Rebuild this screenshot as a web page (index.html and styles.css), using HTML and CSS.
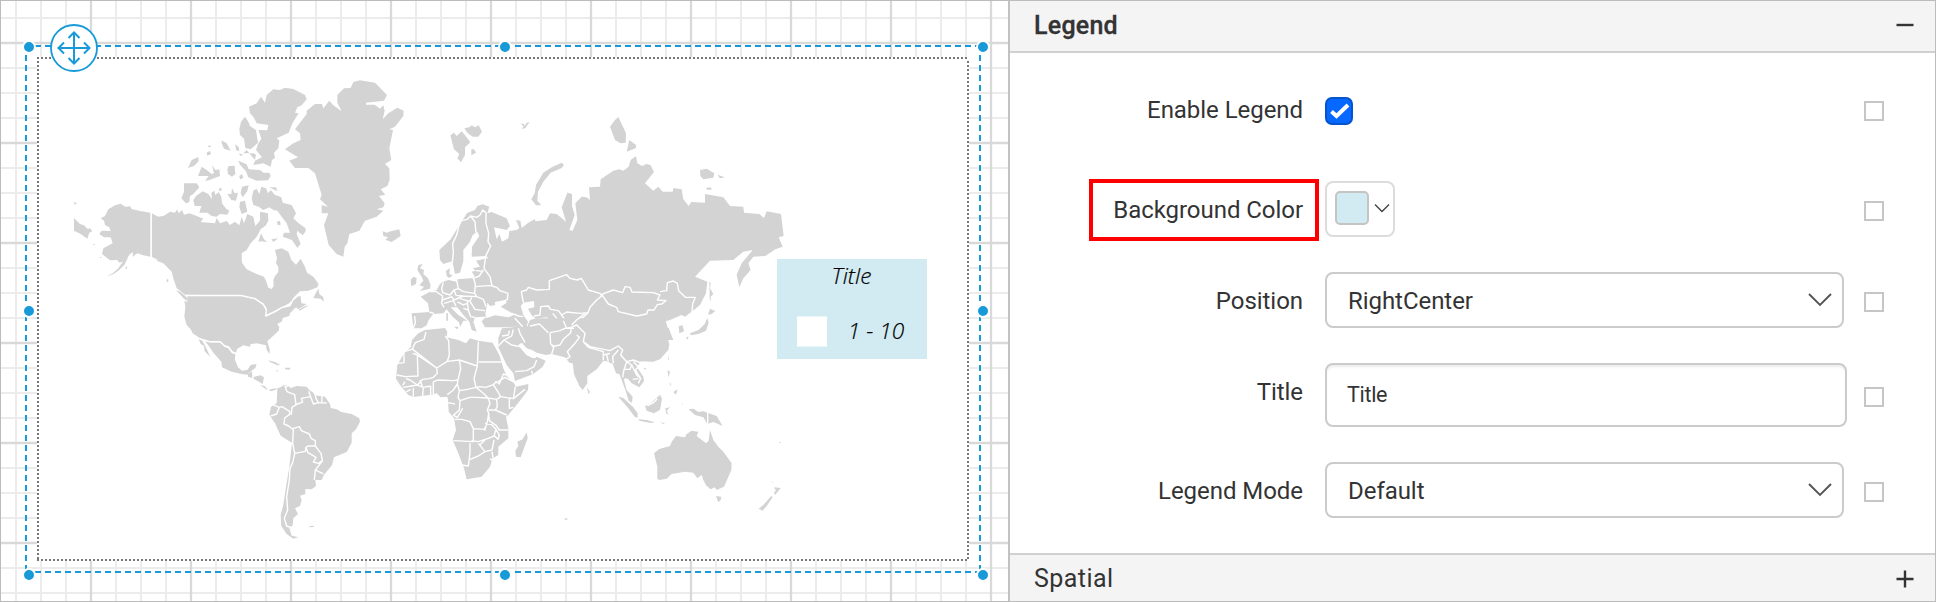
FILE: index.html
```html
<!DOCTYPE html>
<html lang="en">
<head>
<meta charset="utf-8">
<title>Map legend properties</title>
<link rel="stylesheet" href="styles.css">
</head>
<body>
<div class="app">
  <main class="canvas">
    <svg class="design" width="1007" height="600" viewBox="1 1 1007 600">
      <defs>
        <pattern id="grid" x="15" y="17" width="100" height="100" patternUnits="userSpaceOnUse">
          <path class="minor" d="M1 0V100M26 0V100M51 0V100M0 1H100M0 51H100M0 76H100"/>
          <path class="major" d="M76 0V100M0 26H100"/>
        </pattern>
      </defs>
      <rect x="0" y="0" width="1010" height="602" fill="url(#grid)"/>
      <rect class="paper" x="37" y="57" width="932" height="504"/>
      <path class="dots" d="M37 58H969M38 61V560M968 61V560M37 560H969"/>
      <path class="dashes" d="M35 46H981M35 572H981M26 45V573M980 45V573"/>

      <!-- North America -->
      <g class="land" transform="translate(60 70) scale(.33333)">
        <path d="M42 396L51 400L43 404ZM42 444L60 462L72 466L84 478L90 474L97 484L88 488L82 506L62 492L42 482Z"/>
        <path d="M122 445L135 438L145 418L165 406L182 401L196 410L210 409L215 417L240 423L272 428V560L250 556L232 550L218 560L219 547L210 552L196 572L178 578L172 570L150 571L126 552L130 535L158 520L152 502L132 502L118 492L125 482L152 483L148 472L135 465L132 452Z"/>
        <path d="M138 620L160 608L175 595L190 572L205 560L193 585L175 602L160 612ZM195 594L202 588L200 598ZM100 522h5v3h-5zM120 561h4v3h-4zM320 628h5v8h-5z"/>
        <path d="M275 430L295 440L312 437L330 425L345 428L352 418L356 430L366 420L372 434L388 430L410 438L430 446L422 456L465 460L470 444L480 460L500 453L510 465L525 455L538 466L545 440L552 460L562 432L580 440L586 468L600 452L606 470L590 500L572 520L560 540L545 550L546 578L560 598L590 612L612 620L618 632L625 653L635 657L641 648L640 630L645 618L655 606L655 590L648 580L651 565L645 540L665 535L685 545L694 570L708 584L722 566L735 590L741 608L760 620L776 642L772 652L745 662L720 664L700 683L688 700L665 712L645 722L618 735L620 715L610 700L585 686L545 678L375 674L360 662L350 655L340 625L335 605L310 580L290 572L275 562Z"/>
        <path d="M348 660L362 666L380 682L383 694L372 686ZM692 690L708 682L722 678L724 700L740 702L715 718L704 706L695 710ZM760 684L768 668L776 656L778 672L790 682L791 695L782 686Z"/>
        <path d="M567 110L590 100L603 80L615 98L620 75L640 58L660 60L675 53L700 57L735 75L740 88L725 106L712 112L705 128L716 130L698 158L686 188L650 205L658 212L655 235L642 248L645 264L636 270L632 290L610 280L580 285L585 272L606 262L588 240L594 222L604 206L595 180L622 181L625 165L590 160L580 140L570 130Z"/>
        <path d="M538 178L543 155L555 140L565 155L570 168L588 180L594 218L572 238L556 234L552 206L540 195Z"/>
        <path d="M535 272L560 283L566 298L600 300L610 308L628 308L632 318L624 331L590 332L565 322L558 304L540 284ZM384 294L395 270L415 261L416 274L402 288ZM414 318L425 290L440 300L455 312L462 310L456 285L466 300L478 298L480 318L448 330L435 333L446 318ZM440 248L450 242L453 252L442 257ZM444 228l8 -2v5h-8zM484 211L500 220L512 242L492 236L486 222ZM526 222L536 232L538 244L528 240ZM536 250L550 254L542 258ZM502 300L506 288L524 287L526 312L516 320L504 312ZM538 318L546 312L550 324L540 328ZM560 240L550 250L580 250L588 254L585 270L575 258Z"/>
        <path d="M372 340L410 340L418 352L400 372L390 378L388 396L378 400L364 385L372 365ZM400 390L408 378L428 364L445 372L456 388L454 368L463 362L466 375L476 366L484 380L486 400L498 416L508 422L502 434L480 432L470 440L455 438L442 428L418 428L424 408L404 408ZM502 372L514 372L516 354L524 370L534 368L528 392L514 390ZM546 350L566 346L562 364L548 382L542 370ZM540 395L555 392L562 425L545 432L538 412ZM477 355h8v7h-8z"/>
        <path d="M575 385L580 362L590 356L598 372L604 350L618 355L624 370L632 360L644 374L664 382L668 398L695 405L708 430L700 445L716 460L736 474L737 484L728 496L712 482L710 492L722 522L712 534L696 510L668 500L672 488L690 488L680 460L665 440L652 422L640 420L628 412L610 420L596 410L580 405ZM628 352L648 352L652 364ZM600 425L624 430L625 452L618 466L604 476L596 470L600 450ZM650 455L660 452L662 464L654 466ZM595 515L603 490L612 508L622 516L605 514ZM634 508L655 505L640 516Z"/>
        <path d="M675 238L700 220L722 210L720 190L705 178L740 132L740 122L765 102L786 102L790 115L808 92L820 106L845 124L832 98L832 75L852 55L872 54L880 36L900 31L945 38L981 75L972 92L918 98L918 104L944 104L960 116L970 106L974 122L968 148L985 130L1012 113L1031 122L1030 138L1005 170L988 178L999 180L988 235L994 270L975 282L988 295L989 330L982 348L962 358L976 374L957 378L974 400L970 412L950 418L970 422L950 440L915 452L898 482L868 492L862 520L854 530L850 560L830 552L806 525L792 465L805 430L785 430L785 405L804 410L780 388L785 375L765 310L745 294L705 294L688 272L714 262Z"/>
        <path d="M968 484L980 488L992 484L1018 478L1022 498L995 516L976 509L984 502L970 498ZM1052 640L1062 622L1068 636L1058 648ZM1074 590L1080 584V605Z"/>
        <path class="edge" d="M273.500 426V562L292 571"/>
      </g>

      <g class="land" transform="translate(160 280) scale(.33333)">
        <path d="M82 49H243L285 58L310 75L318 90L318 109L345 97L365 84L390 78L398 62L408 52L414 70L424 78L405 84L390 100L388 108L368 114L366 124L352 132L358 142L356 152L322 184L329 208V222L320 210L318 196L290 190L272 192L270 200L250 196L232 206L228 218L218 214L205 198L195 196L180 183L150 184L120 175L98 160L92 148L80 135L73 110L76 80L73 62L82 66Z"/>
        <path d="M135 182L150 187L180 187L194 201L204 203L216 220L226 222L225 240L234 262L246 272L262 270L272 255L290 252L286 264L270 276L262 284L245 282L215 275L186 262L184 245L160 218L148 200ZM116 177L127 182L140 206L150 230L134 214L132 198L122 192Z"/>
        <path d="M264 282L276 274L277 294L264 290ZM282 290L302 286L312 292L308 312L294 304L280 296ZM300 315L314 318L324 329L318 328ZM326 330L338 326L350 325L348 329L332 334ZM325 241L345 246L362 256L352 256L330 246ZM374 263L392 263L388 269L376 268ZM348 272l7 -1v3h-7zM416 89L430 80L448 75L432 85L418 92ZM448 739L462 737L461 741L448 742Z"/>
        <path d="M372 315L380 314L376 326L385 318L392 324L410 318L440 320L448 330L460 338L464 346L495 350L510 372L512 384L530 388L544 396L575 402L598 415L600 425L588 448L575 460L575 488L560 516L522 532L516 556L492 584L485 600L466 600L468 618L455 628L436 627L436 642L420 647L425 660L420 678L405 685L414 702L400 715L398 736L390 744L400 768L415 772L400 776L380 762L364 738L362 705L370 675L378 620L388 560L396 488L362 467L345 430L328 405L333 380L350 370L352 325L364 320Z"/>
        <path class="edge" d="M76 46H243L285 56L310 73L319 90L317 108L345 95L365 83L390 77L398 61L410 50M118 176L150 185.500L180 185L195 199L205 201L217 217L230 221"/>
        <path class="edge" d="M374 316L381 335L404 344L408 374L396 382L394 405M408 374L428 366L424 355L452 350L446 334M452 350L460 372L475 368L500 369M466 345L468 356L477 370M486 347L485 370M338 374L358 382L350 402L332 408M358 382L366 380L390 395L388 404L374 414L372 432L386 438L398 448M398 446L418 440L424 452L448 462L454 476L466 482V498L444 498L438 502L436 514L404 520L398 490L400 448M438 502L444 518L468 532L460 546L476 550L487 542L483 520L466 498M488 542L466 570L490 582M466 570L463 600M405 518L398 548L390 565L388 600L380 650L383 690L373 715L380 738L398 744M390 744L398 768"/>
      </g>

      <!-- Eurasia -->
      <g class="land" transform="translate(380 100) scale(.33333)">
        <path d="M178 450L212 418L238 375L262 338L285 330L292 318L308 313L328 320L322 340L335 336L380 355L390 378L380 390L342 382L350 418L358 402L366 425L385 415L388 393L410 390L418 384L408 360L421 362L425 384L445 368L465 357L466 364L500 360L510 340L530 342L558 365L545 322L562 278L576 282L576 318L584 345L568 390L578 392L592 360L586 310L605 290L620 292L630 300L627 262L660 260L662 238L700 212L718 208L730 212L746 200L752 180L768 168L772 190L786 198L800 192L812 196L822 216L795 250L820 272L835 260L848 275L878 275L880 264L905 268L910 298L926 318L934 306L975 308V282L1030 292L1050 318L1090 320L1092 338L1138 342L1152 354L1160 334L1203 342L1211 408L1196 412L1208 440L1186 448L1156 468L1120 470L1105 490L1112 510L1090 535L1078 562L1070 524L1085 490L1118 450L1090 455L1060 480L990 482L945 530L982 545L978 580L960 615L935 635L915 650L905 645L870 660L842 668L850 682L866 684L880 720H450L410 680L370 682L315 682L305 664L318 650L285 652L280 666L290 695L275 690L268 665L250 645L232 622L212 622L235 645L262 662L250 662L240 682L238 668L218 650L200 628L190 640L160 642L146 660L140 676L125 685L100 685L95 640L148 636L144 610L122 590L150 575L170 570L180 552L190 545L205 540L230 545L232 538L280 534L284 528L275 515L288 512L278 505L300 500L288 482L325 474L318 468L275 470L276 440L298 408L292 395L278 405L270 425L250 450L250 484L240 518L225 522L217 484L190 492L180 480Z"/>
        <path d="M115 495L128 492L120 505L132 510L130 522L144 535L152 555L150 566L120 573L132 560L118 556L130 542L125 530L112 510ZM92 540L100 530L110 534L108 552L94 558ZM198 512L210 505L208 522L218 526L208 534L200 528Z"/>
        <path d="M211 106L222 98L230 108L245 94L255 106L271 127L255 142L255 165L243 187L232 175L238 162L222 148ZM253 85L268 82L275 76L285 82L296 76L306 95L295 110L278 110L262 98ZM274 148L282 148L288 158L274 166ZM421 70L432 72L434 78L440 68L449 66L436 84L426 88L430 78Z"/>
        <path d="M454 298L464 280L468 255L490 218L515 202L545 188L552 194L545 204L512 218L490 245L474 275L472 302L484 316L468 316ZM690 80L705 60L715 51L728 78L738 100L737 128L722 130L705 120ZM740 155L748 120L768 135V144ZM960 210L980 206L1003 220L1000 233L970 238L961 228ZM1012 224L1035 232L1020 235ZM978 264L992 262L995 269L982 269Z"/>
        <path d="M988 545L992 548L990 565L1000 582L992 590L993 606L989 595ZM984 644L990 626L1006 633L995 642ZM982 654L986 668L978 692L955 702L932 706L930 700L956 690L974 672ZM896 678L908 676L912 694L898 700ZM918 712L926 710L922 720ZM199 640h5v22h-5zM222 680L236 680L232 688Z"/>
        <path class="sea" d="M316 642L322 608L330 618L346 615L344 606L375 600L380 608L362 620L404 644L385 652L345 646L320 654ZM422 618L430 608L462 603L463 622L444 626L455 646L466 655L462 680L446 684L440 678L444 665L430 645Z"/>
        <path class="edge" d="M217 488L220 455L218 430L230 405L236 380L244 362L262 358L272 348L290 352L300 345L308 330L318 338V370L326 400L324 425L332 438L316 470M272 348L285 366L288 398M300 345L290 352M316 475L312 505L330 530L336 558L350 562L360 572L384 580L382 598L370 606M288 512L310 514M278 536L298 528L310 510M286 560L335 556M280 534L286 552L284 580L290 590L310 598L318 620M230 540L235 566L250 575L284 580M190 548L185 565L188 578L210 585L222 570L235 566M164 572L188 588L185 610L192 622M150 575L165 575M188 600L215 590L222 600L250 588L290 590M192 610L220 602L228 618M222 570L228 586L250 588M240 596L270 604L275 592M232 606L250 615L262 610M262 604L265 630L250 625M270 604L285 628L315 632M265 630L272 650L285 652M148 636L162 640M104 648L106 668L100 684M396 640L415 648L430 650M404 654L428 680M304 652L318 652"/>
        <path class="edge" d="M430 608L424 575L440 570L445 562L470 570L508 568L508 542L560 524L570 535L592 540L604 535L625 570L660 580L665 588L650 600L630 622L624 638L600 640L560 636L545 645L535 632L512 628L505 618L482 620L480 645L462 648M665 583L700 570L728 578L735 560L750 562L756 576L820 578L840 585L832 600L858 602L845 612L832 614L822 630L804 630L800 642L770 648L715 635L710 622L685 612L665 583M840 575L860 572L862 548L880 543L892 550L896 572L916 592L946 592L938 612L936 636M462 658L500 654L530 680L545 672L518 640M545 645L560 668L610 652L624 638M556 658L580 665L590 680M530 690L508 695"/>
      </g>

      <!-- Africa, southern Asia and Oceania -->
      <g class="land" transform="translate(370 300) scale(.33333)">
        <path d="M385 115L392 95L396 85L440 80L470 84L480 60L500 55H885L895 90L890 105L898 132L895 150L870 178L850 185L812 184L805 196L800 200L820 230L822 244L808 262L785 250L775 238L765 234L762 240L770 270L788 290L786 308L776 302L768 275L758 248L748 222L738 220L728 192L710 184L700 182L680 208L652 228L652 250L638 270L628 258L612 222L608 190L598 188L585 172L545 162L528 165L500 158L486 150L470 145L455 128L445 136L470 164L494 175L500 170L527 182L518 200L490 222L435 243L430 220L410 195L385 142Z"/>
        <path d="M165 90L225 84L232 95L230 112L265 120L288 130L300 115L325 122L368 128L388 165L400 205L410 228L432 250L438 260L475 252L474 270L445 308L415 345L408 350L415 385V415L385 440L385 465L368 475L360 500L335 530L290 538L282 505L265 460L248 420L258 390L252 355L236 335L234 300L232 290L212 292L200 280L185 284L130 291L115 285L90 255L78 236L82 195L102 160L122 142L126 120L145 100Z"/>
        <path d="M470 397L473 415L452 472L438 470L436 452L445 438L442 425L458 418ZM651 262L660 276L655 282ZM745 290L760 294L790 322L803 340V353L794 350L775 325ZM805 358L830 360L855 367L842 369L808 362ZM825 318L840 312L862 292L870 284L876 296L870 330L852 340L830 332ZM886 325L900 322L890 332L896 345L888 340ZM894 165l3 14h-3zM892 210L900 215L896 232ZM910 276L923 268L918 284ZM900 245l4 14 -5 -6zM934 312l4 3v-4zM822 203l8 2 -6 4zM956 328L970 326L985 336L1000 334L1040 348L1058 378L1030 366L1012 372L1000 352L975 345ZM870 366L885 370L880 372Z"/>
        <path d="M852 460L868 447L900 438L905 425L918 408L945 412L950 402L965 392L985 395L980 408L1008 430L1016 422L1020 390L1030 420L1045 440L1060 455L1085 490L1084 510L1062 560L1040 570L1034 562L1022 568L1008 556L1000 540L995 525L982 535L970 518L945 515L905 522L890 536L868 540L862 536V500ZM1038 588L1054 590L1052 600L1045 607ZM1212 562L1232 564L1215 586L1212 576L1218 572ZM1204 588L1208 592L1190 618L1178 632L1166 626L1180 615ZM584 655h8v4h-8zM1205 544l4 4h-3zM1229 426h4v3h-4z"/>
        <path class="sea" d="M456 130L470 148L490 158L500 172L488 174L470 166L445 136Z"/>
        <path class="edge" d="M168 96L162 118L136 128L126 148L102 155V188L82 190M128 148L200 204L232 184L238 165L236 122L226 108M128 160L142 165L144 228L106 230L80 225M142 165L200 204L202 220L190 232L178 236L158 238L142 255L120 240L108 236M232 184L268 180L322 198L325 125M326 186H394M268 180L272 206L264 240L250 242L205 240L190 245M322 198L312 235L318 262L330 260L348 262L370 254L378 245L388 252L400 222L408 225M318 262L292 268L268 272L262 252L264 240M262 252L250 270L232 284M268 272L264 292L270 302L300 292L320 292L354 294M318 262L340 280L354 294M370 254L384 276L392 290L430 296L465 268M392 290L380 298L354 294L360 310L352 330L356 340L352 365L345 388L310 386L300 365L275 358L254 358M270 302L268 330L250 346L262 352L278 325M234 308L255 312M380 298L382 320L376 330L410 345M356 330L376 330M356 340L358 362L378 376L388 390H414M310 386V425L250 422M345 370L365 374L378 388L372 408L355 415L325 425L305 422M378 388L388 405L384 418L374 408M345 380V392M300 430V458L295 498L275 495M325 430L345 455L325 468L300 478M345 455L366 450L372 420M366 455L370 478M345 420L330 434M360 476L368 482M418 296V325L430 322M384 245L405 232L430 245M430 296L436 260M190 245V282M182 258V285M160 262L158 288M130 264V290M100 262L125 258L142 255L160 262L182 258M105 245L98 256M150 240L158 262M108 276L122 268"/>
        <path class="edge" d="M385 138L402 120L425 135L460 142M402 120L425 108L430 88M396 108L415 105L418 92M435 215L470 212L492 200L500 180M484 212L488 222M445 85L450 100L465 128M540 98L542 132L552 140L545 162M540 98L570 92L585 85L604 82L602 98L580 118L570 135L545 140M604 82L620 75L645 100L640 125L660 140L720 152L745 138L758 150L752 165L770 185L790 180L810 188M620 105L628 112L615 130L592 155L600 170L588 178M640 125L655 142L700 155V180M700 165L720 160M710 165L715 185M745 150L728 170L730 190M762 210L770 185L785 195L780 208L762 208L758 232M790 185L806 200L796 210L812 235L805 250M785 195L800 225L810 234M788 238L805 236M480 78L508 72L535 98M580 62L590 85L612 85M645 40L620 60L605 75M1013 335V375M832 318L850 308L862 296"/>
      </g>

      <!-- Map legend -->
      <g>
        <rect class="legend-box" x="777" y="259" width="150" height="100"/>
        <rect class="paper" x="797" y="316.500" width="30" height="30"/>
        <text class="legend-text" x="851.500" y="284" text-anchor="middle">Title</text>
        <text class="legend-text" x="876" y="339" text-anchor="middle">1 - 10</text>
      </g>

      <g class="handles">
        <circle cx="29" cy="47" r="6"/><circle cx="505" cy="47" r="6"/><circle cx="983" cy="47" r="6"/>
        <circle cx="29" cy="311" r="6"/><circle cx="983" cy="311" r="6"/>
        <circle cx="29" cy="575" r="6"/><circle cx="505" cy="575" r="6"/><circle cx="983" cy="575" r="6"/>
      </g>
      <g class="move">
        <circle cx="74" cy="48" r="23"/>
        <path d="M74 33V63M59 48H89M68.500 38L74 32.500L79.500 38M68.500 58L74 63.500L79.500 58M64 42.500L58.500 48L64 53.500M84 42.500L89.500 48L84 53.500"/>
      </g>
    </svg>
  </main>

  <aside class="panel">
    <header class="section">
      <h2 class="section-title open">Legend</h2>
      <svg class="toggle" width="18" height="18" viewBox="0 0 18 18"><path d="M.5 9H17.500"/></svg>
    </header>
    <div class="rows">
      <div class="row enable">
        <label class="label">Enable Legend</label>
        <span class="check"><svg width="24" height="24" viewBox="0 0 24 24"><path d="M4.500 12.500L9.500 17L21 6"/></svg></span>
        <span class="box"></span>
      </div>
      <div class="row color">
        <label class="label marked"><span>Background Color</span></label>
        <span class="picker"><span class="swatch"></span><svg width="16" height="10" viewBox="0 0 16 10"><path d="M1 1.500L8 8.500L15 1.500"/></svg></span>
        <span class="box"></span>
      </div>
      <div class="row">
        <label class="label">Position</label>
        <span class="select">RightCenter<svg width="24" height="14" viewBox="0 0 24 14"><path d="M1 1L12 12L23 1"/></svg></span>
        <span class="box"></span>
      </div>
      <div class="row title-row">
        <label class="label">Title</label>
        <span class="input">Title</span>
        <span class="box"></span>
      </div>
      <div class="row">
        <label class="label">Legend Mode</label>
        <span class="select">Default<svg width="24" height="14" viewBox="0 0 24 14"><path d="M1 1L12 12L23 1"/></svg></span>
        <span class="box"></span>
      </div>
    </div>
    <footer class="section bottom">
      <h2 class="section-title">Spatial</h2>
      <svg class="toggle" width="18" height="18" viewBox="0 0 18 18"><path d="M.5 9H17.500M9 .5V17.500"/></svg>
    </footer>
  </aside>
</div>
</body>
</html>
```
FILE: styles.css
```css
* { box-sizing: border-box; }
body { margin: 0; font-family: Roboto, "Liberation Sans", sans-serif; color: #333; background: #fff; }
.app { display: flex; width: 1936px; height: 602px; border: 1px solid #bcbcbc; overflow: hidden; }
.canvas { width: 1007px; height: 600px; flex: none; }
.design { display: block; }
.minor { stroke: #ececec; stroke-width: 2; }
.major { stroke: #d9d9d9; stroke-width: 2.3; }
.paper { fill: #fff; }
.dots { fill: none; stroke: #777; stroke-width: 2; stroke-dasharray: 2 2; }
.dashes { fill: none; stroke: #189ad8; stroke-width: 2; stroke-dasharray: 6 4; }
.land { fill: #d3d3d3; }
.land .sea { fill: #fff; }
.land .edge { fill: none; stroke: #fff; stroke-width: 4.2; stroke-linejoin: round; }
.legend-box { fill: #d2ebf2; }
.legend-text { font: italic 300 22.7px "Open Sans", "Noto Sans", sans-serif; fill: #000; stroke: #000; stroke-width: .2; }
.handles circle { fill: #189ad8; stroke: #fff; stroke-width: 2; }
.move circle { fill: #fff; stroke: #189ad8; stroke-width: 1.800; }
.move path { fill: none; stroke: #189ad8; stroke-width: 2; }

.panel { flex: 1; display: flex; flex-direction: column; border-left: 2px solid #c2c2c2; }
.section { display: flex; align-items: center; justify-content: space-between; flex: none; height: 52px; padding: 0 21px 2px 24px; background: #f4f4f4; border-bottom: 2px solid #d0d0d0; }
.section.bottom { height: 48px; padding-bottom: 0; border-bottom: 0; border-top: 2px solid #d0d0d0; }
.section-title { margin: 0; padding-top: 2px; font-size: 25px; line-height: 30px; font-weight: 400; letter-spacing: .45px; }
.section-title.open { font-weight: 500; letter-spacing: .25px; -webkit-text-stroke: .3px #333; }
.toggle { fill: none; stroke: #333; stroke-width: 2.400; }
.bottom .toggle { margin-top: 2px; }

.rows { flex: none; height: 500px; padding-top: 30px; }
.row { display: grid; grid-template-columns: 293px 561px 20px; align-items: center; height: 56px; margin-bottom: 35px; }
.row.enable { margin-bottom: 42px; }
.row.title-row { height: 64px; }
.label { padding-top: 2px; font-size: 24px; line-height: 28px; letter-spacing: -.05px; text-align: right; white-space: nowrap; }
.title-row .label { padding: 0 0 6px; }
.enable .label { padding: 0 0 3px; }
.row .marked { display: flex; justify-content: flex-end; align-items: center; justify-self: end; width: 230px; height: 62px; margin: -2px -16px -4px 0; padding: 0 12px 0 0; border: 4px solid #f00; }
.check, .picker, .select, .input { margin-left: 22px; display: flex; align-items: center; }
.check { width: 28px; height: 28px; border: 2px solid #0454cf; border-radius: 7px; background: #0668ff; }
.check path { fill: none; stroke: #fff; stroke-width: 4; }
.picker { width: 70px; height: 56px; padding: 0 0 2px 8px; gap: 5px; border: 2px solid #dcdcdc; border-radius: 8px; }
.picker svg, .select svg { fill: none; stroke: #444; stroke-width: 1.400; }
.swatch { width: 34px; height: 34px; border: 2px solid #c4c4c4; border-radius: 5px; background: #d2ebf2; }
.select { justify-content: space-between; width: 519px; height: 56px; padding: 1px 10px 0 21px; border: 2px solid #cbcbcb; border-radius: 8px; font-size: 24px; letter-spacing: -.05px; }
.select svg { margin-top: -1px; stroke: #555; stroke-width: 1.900; }
.input { width: 522px; height: 64px; padding: 0 20px 1px; border: 2px solid #cbcbcb; border-radius: 8px; font-size: 21.5px; letter-spacing: -.3px; box-shadow: inset 0 3px 3px -1px #ebebeb; }
.box { width: 20px; height: 20px; margin-top: 4px; border: 2px solid #c6c6c6; }
.enable .box { margin-top: 0; }
```
